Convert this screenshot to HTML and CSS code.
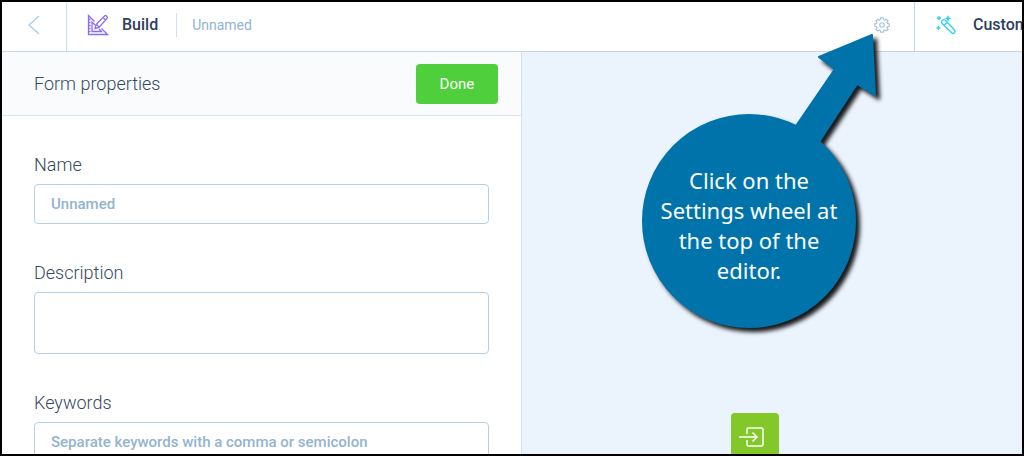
FILE: index.html
```html
<!DOCTYPE html>
<html lang="en">
<head>
    <meta charset="UTF-8">
    <title>Form properties</title>
    <link rel="stylesheet" href="styles.css">
</head>
<body>
    <div class="app">
        <header class="topbar">
            <a href="#" class="back" aria-label="Back">
                <svg width="12" height="20" viewBox="0 0 12 20"><path d="M11 1L1 10l10 9"/></svg>
            </a>
            <div class="step build">
                <svg class="icon purple" width="22" height="22" viewBox="0 0 22 22">
                    <path d="M7.500 7.500L1.500 1.500v19h19L14.500 14.500"/>
                    <path d="M8 11L5 8v9.500h9.500L12 15"/>
                    <path d="M8 14.500l1-4L17.500 2q1-1 2.200.200t.2 2.300L12 13.500zM16 3.500l2.500 2.500M9.500 10.500l2.500 2.500"/>
                    <path d="M2 5.500h1.500M2 8.500h1.500M2 11.500h1.500M2 14.500h1.500M2 17.500h1.500"/>
                </svg>
                <span class="title">Build</span>
                <span class="form-name">Unnamed</span>
                <button class="settings" aria-label="Settings">
                    <svg width="16" height="16" viewBox="0 0 18 18">
                        <path d="M7.500 1h3l.5 2 1.200.5L14 2.500 15.800 4.300l-1.200 1.600.5 1.300 2 .5v2.800l-2 .5-.5 1.300 1.200 1.600L14 15.700l-1.800-1.200-1.200.5-.5 2h-3L7 15l-1.200-.5L4 15.700 2.200 13.900l1.200-1.600-.5-1.300-2-.5V7.700l2-.5.5-1.300L2.200 4.300 4 2.500l1.800 1L7 3z"/>
                        <circle cx="9" cy="9" r="2.500"/>
                    </svg>
                </button>
            </div>
            <div class="step customize">
                <svg class="icon cyan" width="22" height="22" viewBox="0 0 22 22">
                    <path d="M7.300 9.700q-1.600-1.700 0-3.300 1.600-1.500 3.300.100L19.500 16q1.300 1.500 0 2.800t-2.800 0zM9 11.500l3.300-3.300"/>
                    <path d="M4 2v4M2 4h4M3.500 12v4M1.500 14h4"/>
                    <path d="M13 1l1 2.500 2.500 1-2.500 1-1 2.500-1-2.500-2.500-1 2.500-1z" class="star"/>
                </svg>
                <span class="title">Customize</span>
            </div>
        </header>
        <main class="editor">
            <form class="panel">
                <div class="panel-head">
                    <h1>Form properties</h1>
                    <button type="button" class="done">Done</button>
                </div>
                <div class="fields">
                    <div class="field">
                        <label for="name">Name</label>
                        <input type="text" id="name" value="Unnamed">
                    </div>
                    <div class="field">
                        <label for="description">Description</label>
                        <textarea id="description"></textarea>
                    </div>
                    <div class="field">
                        <label for="keywords">Keywords</label>
                        <input type="text" id="keywords" placeholder="Separate keywords with a comma or semicolon">
                    </div>
                </div>
            </form>
            <section class="preview">
                <button class="enter" aria-label="Add field">
                    <svg width="34" height="20" viewBox="0 0 34 20">
                        <path d="M9 7V2.500Q9 1 10.500 1h13Q25 1 25 2.500v15q0 1.500-1.500 1.500h-13Q9 19 9 17.500V13M1 10h18M14.500 5.500L19 10l-4.500 4.500"/>
                    </svg>
                </button>
            </section>
        </main>
        <div class="callout">
            <svg width="250" height="306" viewBox="0 0 250 306">
                <circle cx="114" cy="194" r="106"/>
                <path d="M237 8L184 30 200 42 161 99 184 115 222 57 240 68z"/>
            </svg>
            <p>Click on the Settings wheel at the top of the editor.</p>
        </div>
    </div>
</body>
</html>
```
FILE: styles.css
```css
* {
    box-sizing: border-box;
    margin: 0;
    padding: 0;
}
body {
    font-family: Roboto, "Liberation Sans", sans-serif;
    color: #34495e;
    background: #fff;
}
button,
input,
textarea {
    font-family: inherit;
}
svg {
    display: block;
    flex: none;
    fill: none;
}
.app {
    position: relative;
    display: flex;
    flex-direction: column;
    height: 100vh;
    border: 2px solid #000;
    overflow: hidden;
}

/* top bar */
.topbar {
    display: flex;
    flex: none;
    height: 50px;
    border-bottom: 1px solid #c3d5e6;
}
.back {
    display: flex;
    align-items: center;
    justify-content: center;
    width: 65px;
    padding-bottom: 4px;
    border-right: 1px solid #cfe0ee;
}
.back svg {
    stroke: #a9cbe5;
    stroke-width: 1.3;
}
.step {
    display: flex;
    align-items: center;
    padding: 0 24px 4px 20px;
}
.build {
    flex: 1;
}
.customize {
    width: 108px;
    padding-right: 0;
    border-left: 1px solid #c3d5e6;
    overflow: hidden;
}
.icon {
    stroke-width: 1.3;
}
.icon.purple {
    stroke: #8b6cf5;
}
.icon.cyan {
    stroke: #2fcdf8;
}
.icon .star {
    fill: #2fcdf8;
    stroke: none;
}
.title {
    margin-left: 13px;
    font-size: 16px;
    font-weight: 500;
    color: #2c405a;
}
.customize .title {
    margin-left: 16px;
}
.form-name {
    margin-left: 18px;
    padding-left: 15px;
    border-left: 1px solid #cfe0ee;
    font-size: 14px;
    line-height: 24px;
    color: #94b4ce;
}
.settings {
    margin-left: auto;
    border: 0;
    background: none;
    cursor: pointer;
}
.settings svg {
    stroke: #a3c3de;
    stroke-width: 1.3;
}

/* form properties */
.editor {
    display: flex;
    flex: 1;
    min-height: 0;
}
.panel {
    width: 51%;
    border-right: 1px solid #d3e1ec;
}
.panel-head {
    display: flex;
    align-items: center;
    justify-content: space-between;
    height: 64px;
    padding: 0 23px 0 32px;
    background: #fafbfd;
    border-bottom: 1px solid #d8e3ec;
}
.panel-head h1 {
    font-size: 18px;
    font-weight: 300;
}
.done {
    padding: 0 24px;
    border: 0;
    border-radius: 4px;
    background: #4fcf3c;
    color: #fff;
    font-size: 15px;
    line-height: 40px;
    cursor: pointer;
}
.fields {
    padding: 0 32px;
}
.field {
    padding-top: 38px;
}
.field label {
    display: block;
    margin-bottom: 8px;
    font-size: 18px;
    font-weight: 300;
    line-height: 22px;
}
.field input,
.field textarea {
    display: block;
    width: 100%;
    height: 40px;
    padding: 0 16px;
    border: 1px solid #b3d0e6;
    border-radius: 4px;
    background: #fff;
    color: #94b4ce;
    font-size: 15px;
    font-weight: 500;
}
.field textarea {
    height: 62px;
    resize: none;
}
.field input::placeholder {
    color: #94b4ce;
}

/* preview */
.preview {
    flex: 1;
    padding: 361px 0 0 209px;
    background: #ebf3fd;
}
.enter {
    display: flex;
    align-items: center;
    justify-content: center;
    width: 48px;
    height: 48px;
    border: 0;
    border-radius: 4px;
    background: #82c829;
    cursor: pointer;
}
.enter svg {
    stroke: #fff;
    stroke-width: 1.5;
}

/* help bubble over the editor */
.callout {
    position: absolute;
    top: 25px;
    left: 633px;
}
.callout svg {
    fill: #0073ab;
    stroke: #0073ab;
    stroke-width: 2;
    stroke-linejoin: round;
    filter: drop-shadow(4px 4px 2px rgba(0, 0, 0, 0.9));
}
.callout p {
    position: absolute;
    top: 138px;
    left: 14px;
    width: 200px;
    color: #fff;
    font-family: "Noto Sans", sans-serif;
    font-size: 22px;
    line-height: 30px;
    text-align: center;
}
```
